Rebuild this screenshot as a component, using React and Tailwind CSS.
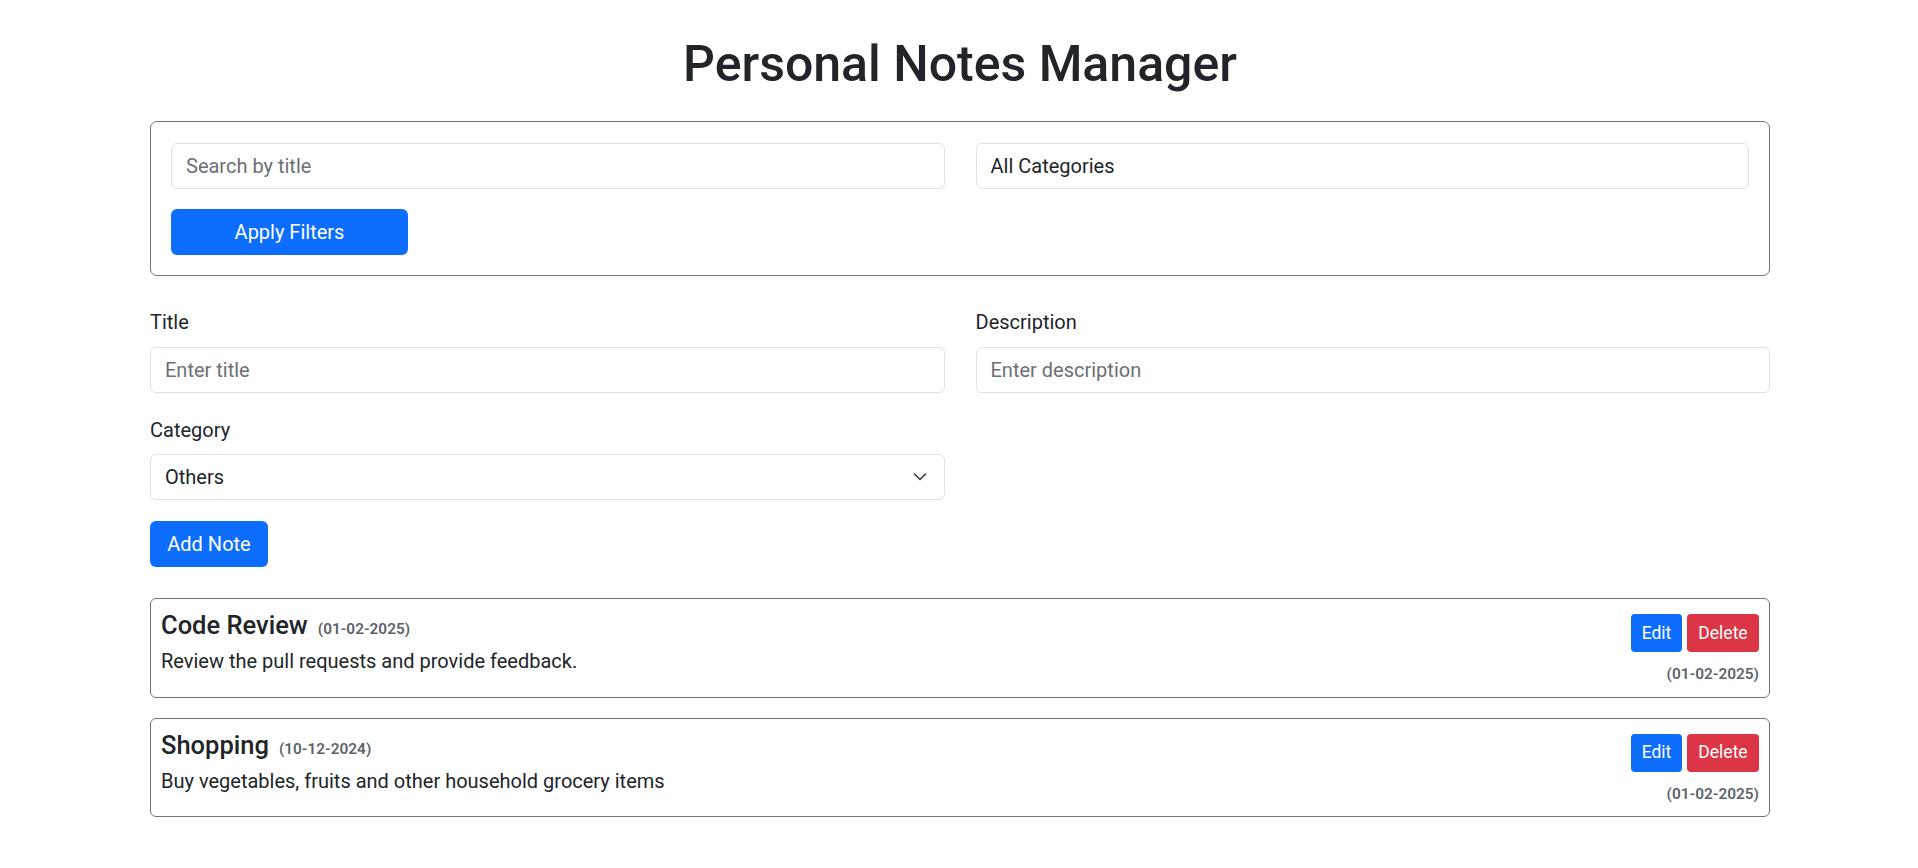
import React from "react";

const FONT = { fontFamily: 'Roboto, "Noto Sans", "Liberation Sans", sans-serif' };

function Chevron() {
  return (
    <svg width="16" height="12" viewBox="0 0 16 12" fill="none" stroke="#343a40" strokeWidth="1.6" strokeLinecap="round" strokeLinejoin="round">
      <path d="m2.5 3 5.5 5.5 5.5-5.5" />
    </svg>
  );
}

function NoteCard({ title, date, desc, updated }) {
  return (
    <div className="border border-[#6c757d] rounded-[6px] pt-[10px] px-[10px] pb-[11px] flex justify-between items-start">
      <div>
        <h5 className="text-[25.5px] leading-[28.8px] font-medium mb-[3px] mt-[2px]">
          {title}
          <span className="ml-[10px] text-[15.4px] font-semibold text-[#5c636a]">({date})</span>
        </h5>
        <p className="text-[20px] leading-[28.8px]">{desc}</p>
      </div>
      <div className="flex flex-col items-end pt-[5px]">
        <div className="flex gap-[5px]">
          <button className="h-[38px] w-[51px] rounded-[4px] bg-[#0d6efd] text-white text-[17.5px] leading-none">Edit</button>
          <button className="h-[38px] w-[72px] rounded-[4px] bg-[#dc3545] text-white text-[17.5px] leading-none">Delete</button>
        </div>
        <div className="mt-[12px] text-[15.4px] leading-[21.6px] font-semibold text-[#5c636a]">({updated})</div>
      </div>
    </div>
  );
}

export default function App() {
  const inputCls =
    "w-full h-[46px] px-[14px] border border-[#dee2e6] rounded-[6px] text-[20px] text-[#212529] placeholder:text-[#6c7075] outline-none bg-white";
  return (
    <div className="min-h-screen bg-white text-[#212529]" style={FONT}>
      <div className="ml-[150px] mr-[148px] pt-[35.5px] pb-[40px]">
        <h1 className="text-center text-[50px] leading-[57.6px] font-medium mb-[28px]">Personal Notes Manager</h1>

        <div className="border border-[#6c757d] rounded-[7px] pt-[21px] px-[20px] pb-[20px]">
          <div className="grid grid-cols-2 gap-[31px]">
            <input className={inputCls} placeholder="Search by title" />
            <div className="w-full h-[46px] px-[14px] border border-[#dee2e6] rounded-[6px] text-[20px] flex items-center">All Categories</div>
          </div>
          <button className="mt-[20px] w-[237px] h-[46px] rounded-[6px] bg-[#0d6efd] text-white text-[20px]">Apply Filters</button>
        </div>

        <div className="mt-[32px] grid grid-cols-2 gap-x-[31px]">
          <div>
            <label className="block text-[20px] leading-[28.8px] mb-[10px]">Title</label>
            <input className={inputCls} placeholder="Enter title" />
          </div>
          <div>
            <label className="block text-[20px] leading-[28.8px] mb-[10px]">Description</label>
            <input className={inputCls} placeholder="Enter description" />
          </div>
          <div className="mt-[23px]">
            <label className="block text-[20px] leading-[28.8px] mb-[9.6px]">Category</label>
            <div className="w-full h-[46px] pl-[14px] pr-[16px] border border-[#dee2e6] rounded-[6px] text-[20px] flex items-center justify-between">
              <span>Others</span>
              <Chevron />
            </div>
          </div>
        </div>

        <button className="mt-[21px] h-[46px] w-[118px] rounded-[6px] bg-[#0d6efd] text-white text-[20px]">Add Note</button>

        <div className="mt-[31px] flex flex-col gap-[20px]">
          <NoteCard title="Code Review" date="01-02-2025" desc="Review the pull requests and provide feedback." updated="01-02-2025" />
          <NoteCard title="Shopping" date="10-12-2024" desc="Buy vegetables, fruits and other household grocery items" updated="01-02-2025" />
        </div>
      </div>
    </div>
  );
}
